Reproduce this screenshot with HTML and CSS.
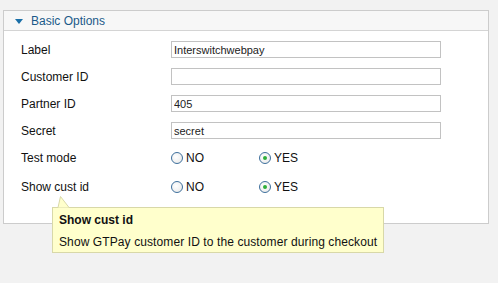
FILE: index.html
```html
<!DOCTYPE html>
<html>
<head>
<meta charset="utf-8">
<link rel="stylesheet" href="styles.css">
</head>
<body>
<div class="panel">
  <div class="panel-head"><span class="tri"></span><span class="title">Basic Options</span></div>
  <div class="panel-body">
    <div class="row"><label class="lbl">Label</label><input class="txt" type="text" value="Interswitchwebpay"></div>
    <div class="row"><label class="lbl">Customer ID</label><input class="txt" type="text" value=""></div>
    <div class="row"><label class="lbl">Partner ID</label><input class="txt" type="text" value="405"></div>
    <div class="row"><label class="lbl">Secret</label><input class="txt" type="text" value="secret"></div>
    <div class="row radio-row"><label class="lbl">Test mode</label>
      <span class="opt"><span class="radio"></span>NO</span>
      <span class="opt"><span class="radio on"></span>YES</span>
    </div>
    <div class="row radio-row"><label class="lbl">Show cust id</label>
      <span class="opt"><span class="radio"></span>NO</span>
      <span class="opt"><span class="radio on"></span>YES</span>
    </div>
  </div>
</div>
<div class="tip">
  <svg class="tip-arrow" width="16" height="12" viewBox="0 0 16 12"><path d="M2 11.5 L4.5 0.5 L13 11.5" fill="#ffffcc" stroke="#d8d8a8" stroke-width="1"/></svg>
  <div class="tip-title">Show cust id</div>
  <div class="tip-text">Show GTPay customer ID to the customer during checkout</div>
</div>
</body>
</html>
```
FILE: styles.css
```css
html, body { margin: 0; padding: 0; }
body {
  background: #f2f2f2;
  font-family: "Liberation Sans", Arial, sans-serif;
  font-size: 12px;
  color: #111;
  width: 498px;
  height: 283px;
  position: relative;
  overflow: hidden;
}
.panel {
  margin: 10px 0 0 3px;
  width: 484px;
  height: 212px;
  background: #fff;
  border: 1px solid #cccccc;
}
.panel-head {
  height: 19px;
  background: #f7f7f7;
  border-bottom: 1px solid #d4d4d4;
  display: flex;
  align-items: center;
  padding-left: 11px;
}
.tri {
  width: 0; height: 0;
  border-left: 4px solid transparent;
  border-right: 4px solid transparent;
  border-top: 5px solid #1a6fa8;
  margin-right: 8px;
  margin-top: 1px;
}
.title {
  color: #1b5a89;
  font-size: 12px;
}
.panel-body {
  padding: 10px 0 0 17px;
}
.row {
  display: flex;
  align-items: center;
  height: 17px;
  margin-bottom: 10px;
}
.radio-row { margin-bottom: 12px; height: 17px; }
.lbl {
  width: 150px;
  flex: none;
}
.txt {
  box-sizing: border-box;
  width: 270px;
  height: 17px;
  border: 1px solid #c2c2c2;
  padding: 0 2px;
  margin: 0;
  font-family: "Liberation Sans", Arial, sans-serif;
  font-size: 11px;
  color: #222;
  background: #fff;
  outline: none;
}
.opt {
  display: inline-flex;
  align-items: center;
  width: 88px;
  flex: none;
}
.radio {
  box-sizing: border-box;
  width: 12px; height: 12px;
  border-radius: 50%;
  border: 1px solid #3d6f9c;
  background: radial-gradient(circle at 40% 40%, #ffffff 0%, #e6e6e6 100%);
  margin-right: 3px;
  position: relative;
}
.radio.on::after {
  content: "";
  position: absolute;
  left: 3px; top: 3px;
  width: 4px; height: 4px;
  border-radius: 50%;
  background: #2fae3a;
}
.radio-row:nth-child(5) { margin-top: 1px; }
.tip {
  position: absolute;
  left: 52px;
  top: 207px;
  width: 324px;
  height: 44px;
  background: #ffffcc;
  border: 1px solid #d8d8a8;
  padding: 0 0 0 6px;
}
.tip-arrow {
  position: absolute;
  left: 3px;
  top: -12px;
}
.tip-title {
  font-weight: bold;
  margin-top: 5px;
  height: 14px;
  line-height: 14px;
}
.tip-text {
  margin-top: 8px;
  line-height: 14px;
  letter-spacing: 0.1px;
}
```
